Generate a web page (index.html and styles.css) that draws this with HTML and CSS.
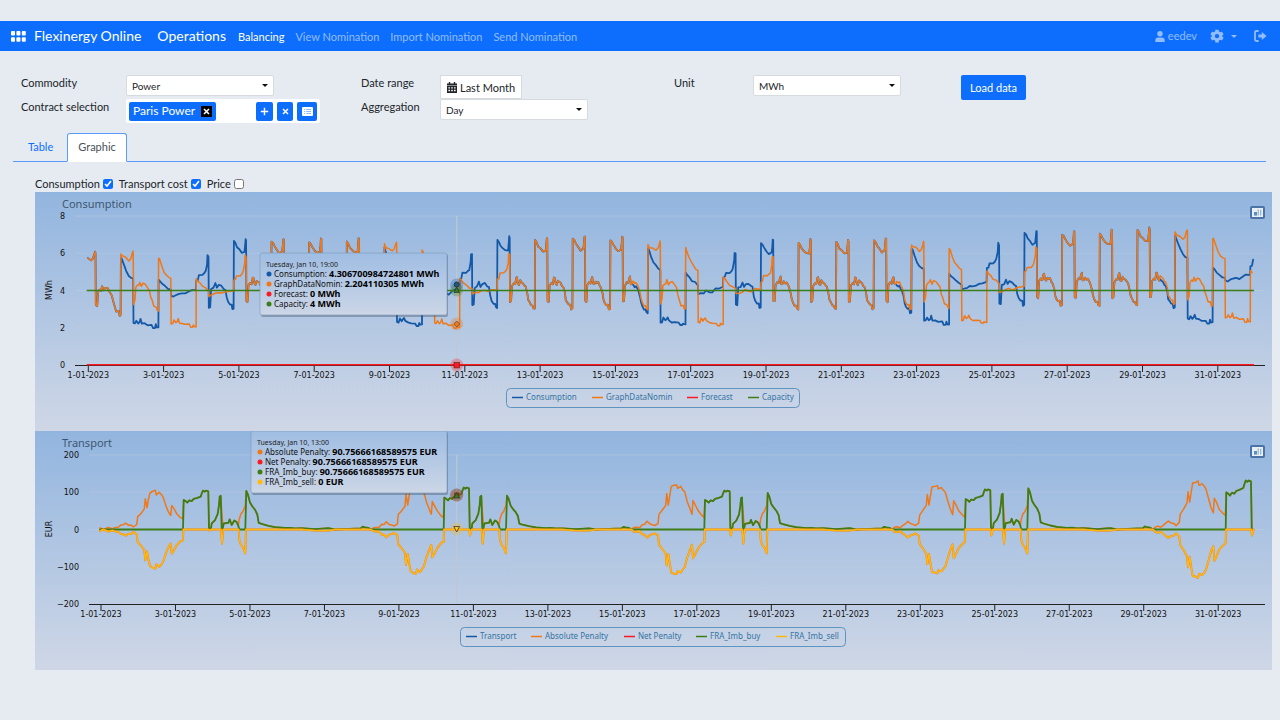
FILE: index.html
```html
<!DOCTYPE html>
<html lang="en">

<head>
    <meta charset="utf-8">
    <title>Flexinergy Online</title>
    <link rel="stylesheet" href="styles.css">
</head>

<body>
    <nav class="navbar">
        <a href="#" class="apps" aria-label="Applications">
            <svg width="15" height="11" viewBox="0 0 15 11" fill="currentColor">
                <rect x="0" y="0" width="4" height="4.6" rx="1" />
                <rect x="5.4" y="0" width="4" height="4.6" rx="1" />
                <rect x="10.8" y="0" width="4" height="4.6" rx="1" />
                <rect x="0" y="6.2" width="4" height="4.6" rx="1" />
                <rect x="5.4" y="6.2" width="4" height="4.6" rx="1" />
                <rect x="10.8" y="6.2" width="4" height="4.6" rx="1" />
            </svg>
        </a>
        <a href="#" class="brand">Flexinergy Online</a>
        <a href="#" class="brand section">Operations</a>
        <a href="#" class="nav-link active">Balancing</a>
        <a href="#" class="nav-link">View Nomination</a>
        <a href="#" class="nav-link">Import Nomination</a>
        <a href="#" class="nav-link">Send Nomination</a>
        <div class="nav-right">
            <a href="#" class="user">
                <svg width="10" height="11" viewBox="0 0 10 11" fill="currentColor">
                    <circle cx="5" cy="2.8" r="2.7" />
                    <path d="M0.3 11V9.4Q0.3 6.4 3.2 6.4H6.8Q9.7 6.4 9.7 9.4V11Z" />
                </svg>
                eedev
            </a>
            <a href="#" class="settings" aria-label="Settings">
                <svg width="14" height="14" viewBox="0 0 14 14">
                    <path fill="currentColor" fill-rule="evenodd"
                        d="M5.4 0.8H8.6L9 2.6L10.3 3.3L12 2.7L13.6 5.4L12.2 6.6V7.6L13.6 8.8L12 11.4L10.3 10.8L9 11.6L8.6 13.4H5.4L5 11.6L3.7 10.8L2 11.4L0.4 8.8L1.8 7.6V6.6L0.4 5.4L2 2.7L3.7 3.3L5 2.6ZM7 4.9A2.2 2.2 0 1 0 7 9.3A2.2 2.2 0 1 0 7 4.9Z" />
                </svg>
                <span class="caret"></span>
            </a>
            <a href="#" class="logout" aria-label="Log out">
                <svg width="13" height="12" viewBox="0 0 13 12">
                    <path d="M4.6 1H2.4Q1 1 1 2.4V9.6Q1 11 2.4 11H4.6" fill="none" stroke="currentColor"
                        stroke-width="1.8" />
                    <path d="M4.4 4.6H7.8V2L12.6 6L7.8 10V7.4H4.4Z" fill="currentColor" />
                </svg>
            </a>
        </div>
    </nav>

    <form class="filters" onsubmit="return false">
        <div class="filter-col wide">
            <label for="commodity">Commodity</label>
            <div class="select">
                <select id="commodity">
                    <option>Power</option>
                </select>
            </div>
            <span class="label">Contract selection</span>
            <div class="contracts">
                <span class="chip">Paris Power
                    <button type="button" class="chip-remove" aria-label="Remove Paris Power">
                        <svg width="11" height="11" viewBox="0 0 11 11">
                            <path d="M3 3L8 8M8 3L3 8" stroke="#fff" stroke-width="1.6" />
                        </svg>
                    </button>
                </span>
                <button type="button" class="tool add" aria-label="Add contract">
                    <svg width="9" height="9" viewBox="0 0 9 9">
                        <path d="M4.5 0.8V8.2M0.8 4.5H8.2" stroke="#fff" stroke-width="1.4" />
                    </svg>
                </button>
                <button type="button" class="tool" aria-label="Clear contracts">
                    <svg width="7" height="7" viewBox="0 0 7 7">
                        <path d="M1 1L6 6M6 1L1 6" stroke="#fff" stroke-width="1.5" />
                    </svg>
                </button>
                <button type="button" class="tool list" aria-label="Contract list">
                    <svg width="11" height="9" viewBox="0 0 11 9">
                        <rect x="0" y="0" width="11" height="9" rx="1" fill="#fff" />
                        <path d="M2 2.5H3.2M2 4.5H3.2M2 6.5H3.2M4.2 2.5H9M4.2 4.5H9M4.2 6.5H9" stroke="#0d6efd"
                            stroke-opacity="0.6" stroke-width="0.8" />
                    </svg>
                </button>
            </div>
        </div>
        <div class="filter-col">
            <span class="label">Date range</span>
            <button type="button" class="date-button">
                <svg width="10" height="11" viewBox="0 0 10 11">
                    <path d="M2.5 0V2M7.5 0V2" stroke="#212529" stroke-width="1.4" />
                    <path d="M0 1.4H10V3.4H0ZM0 4H10V11H0Z" fill="#212529" />
                    <path d="M1.4 5.9H8.6M1.4 8.5H8.6" stroke="#fff" stroke-width="1.3" stroke-dasharray="1.6 1.2" />
                </svg>
                Last Month
            </button>
            <label for="aggregation">Aggregation</label>
            <div class="select">
                <select id="aggregation">
                    <option>Day</option>
                </select>
            </div>
        </div>
        <div class="filter-col">
            <label for="unit">Unit</label>
            <div class="select">
                <select id="unit">
                    <option>MWh</option>
                </select>
            </div>
        </div>
        <div>
            <button type="submit" class="load-button">Load data</button>
        </div>
    </form>

    <div class="tabs">
        <a href="#" class="tab">Table</a>
        <a href="#" class="tab active">Graphic</a>
    </div>

    <div class="content">
        <div class="toggles">
            <label>Consumption <input type="checkbox" checked></label>
            <label>Transport cost <input type="checkbox" checked></label>
            <label>Price <input type="checkbox"></label>
        </div>

        <div class="chart">
            <svg id="consumption-chart" viewBox="0 0 1237 239"></svg>
            <button type="button" class="export" aria-label="Export consumption chart">
                <svg width="11" height="9" viewBox="0 0 11 9">
                    <rect width="11" height="9" fill="#e8f0f6" />
                    <path d="M2 4H5V7.6H2Z" fill="#5a8fc0" />
                    <path d="M6.2 1.5V7.5M8.7 1.8V7.6" stroke="#8fb2cc" stroke-width="1.2" />
                </svg>
            </button>
        </div>
        <div class="chart">
            <svg id="transport-chart" viewBox="0 0 1237 239"></svg>
            <button type="button" class="export" aria-label="Export transport chart">
                <svg width="11" height="9" viewBox="0 0 11 9">
                    <rect width="11" height="9" fill="#e8f0f6" />
                    <path d="M2 4H5V7.6H2Z" fill="#5a8fc0" />
                    <path d="M6.2 1.5V7.5M8.7 1.8V7.6" stroke="#8fb2cc" stroke-width="1.2" />
                </svg>
            </button>
        </div>
    </div>

    <script src="charts.js"></script>
</body>

</html>
```
FILE: styles.css
```css
body {
    font-family: Lato, "Open Sans", sans-serif;
    font-size: 11px;
    line-height: 16px;
    margin: 0;
    padding-top: 21px;
    background-color: #e5ebf1;
    color: #212529;
}

a {
    text-decoration: none;
}

button,
select,
input {
    font-family: inherit;
    color: inherit;
    margin: 0;
}

button {
    cursor: pointer;
    padding: 0;
    border: none;
}

svg {
    display: block;
}

.navbar {
    display: flex;
    align-items: center;
    height: 30px;
    padding: 0 13px 0 11px;
    background-color: #0d6efd;
    color: white;
}

.navbar a {
    color: rgba(255, 255, 255, 0.55);
}

.navbar a.apps {
    color: white;
    margin-right: 8px;
}

.navbar a.brand {
    color: white;
    font-size: 14px;
    margin-right: 16px;
}

.navbar a.section {
    margin-right: 12px;
}

.navbar a.nav-link {
    padding-top: 2px;
    margin-right: 11px;
}

.navbar a.active {
    color: white;
}

.nav-right {
    display: flex;
    align-items: center;
    margin-left: auto;
}

.user,
.settings {
    display: flex;
    align-items: center;
    gap: 3px;
    margin-right: 13px;
}

.settings {
    gap: 7px;
    margin-right: 17px;
}

.caret {
    border: 3px solid transparent;
    border-top-color: currentColor;
    border-bottom: none;
}

.filters {
    display: grid;
    grid-template-columns: 340fr 313fr 287fr 298fr;
    padding: 24px 21px 10px;
}

.filter-col {
    display: grid;
    grid-template-columns: 79px auto;
    grid-auto-rows: 24px;
    align-content: start;
    justify-content: start;
}

.filter-col.wide {
    grid-template-columns: 105px auto;
}

.select {
    position: relative;
    width: 148px;
    height: 21px;
}

.select::after {
    content: "";
    position: absolute;
    right: 6px;
    top: 9px;
    border: 3px solid transparent;
    border-top-color: #111;
    border-bottom: none;
}

.select select {
    appearance: none;
    box-sizing: border-box;
    width: 100%;
    height: 100%;
    padding: 0 5px;
    font-size: 10px;
    background-color: white;
    border: 1px solid #d6dbe0;
    border-radius: 2px;
}

.contracts {
    box-sizing: border-box;
    display: flex;
    align-items: center;
    gap: 4px;
    width: 194px;
    height: 24px;
    padding: 0 3px;
    background-color: white;
    border-radius: 2px;
}

.chip {
    display: flex;
    align-items: center;
    gap: 6px;
    height: 19px;
    padding: 0 4px;
    font-size: 12px;
    background-color: #0d6efd;
    color: white;
    border-radius: 2px;
}

.chip-remove {
    background-color: black;
}

.tool {
    display: flex;
    align-items: center;
    justify-content: center;
    width: 16px;
    height: 19px;
    background-color: #0d6efd;
    border-radius: 2px;
}

.tool.add {
    margin-left: auto;
    width: 17px;
}

.tool.list {
    width: 20px;
}

.date-button {
    display: flex;
    align-items: center;
    gap: 3px;
    justify-self: start;
    height: 24px;
    padding: 0 6px;
    font-size: 11px;
    background-color: white;
    border: 1px solid #d6dbe0;
}

.load-button {
    display: block;
    height: 25px;
    width: 65px;
    font-size: 11px;
    background-color: #0d6efd;
    color: white;
    border-radius: 2px;
}

.tabs {
    display: flex;
    margin: 0 14px 0 13px;
    border-bottom: 1px solid #5a9cfb;
}

.tab {
    padding: 5px 13px 6px 14px;
    margin-bottom: -1px;
    border: 1px solid transparent;
    color: #0d6efd;
}

.tab.active {
    padding-left: 10px;
    padding-right: 10px;
    color: #495057;
    background-color: white;
    border-color: #5a9cfb #5a9cfb white;
    border-radius: 3px 3px 0 0;
}

.content {
    padding: 14px 8px 0 35px;
}

.toggles {
    display: flex;
    gap: 6px;
}

.toggles label {
    display: flex;
    align-items: center;
    gap: 3px;
}

.toggles input {
    width: 10px;
    height: 10px;
    accent-color: #0d6efd;
}

.chart {
    position: relative;
}

.chart > svg {
    width: 100%;
    height: auto;
    background: linear-gradient(#92b5df, #cfd7e6);
    font-family: "Noto Sans", sans-serif;
}

.export {
    position: absolute;
    top: 14px;
    right: 7px;
    padding: 2px;
    background-color: #4a74a8;
    border-radius: 2px;
}

.chart-title {
    font-size: 11px;
    fill: #3e576f;
}

.axis-label {
    font-family: "DejaVu Sans", sans-serif;
    font-size: 8px;
    fill: #111;
}

.legend-label {
    font-size: 8px;
    fill: #3474a4;
}

.tip-head {
    font-size: 7px;
    fill: #222;
}

.tip-row {
    font-size: 8px;
    fill: #111;
}

.tip-row tspan {
    font-size: 9px;
    font-weight: bold;
    fill: black;
}

.series {
    fill: none;
    stroke-linejoin: round;
    stroke-linecap: round;
}
```
FILE: charts.js
```js
var BLUE = '#1459a8', ORANGE = '#f07818', RED = '#fb1a24', GREEN = '#3b7d16', YELLOW = '#ffb90f';

// plot area, shared by both charts
var TOP = 24, BOTTOM = 173, RIGHT = 1230;

function line(x1, y1, x2, y2, color, width) {
    return '<line x1="' + x1 + '" y1="' + y1 + '" x2="' + x2 + '" y2="' + y2 +
        '" stroke="' + color + '" stroke-width="' + (width || 1) + '"/>';
}

function text(x, y, cls, anchor, content) {
    return '<text x="' + x + '" y="' + y + '" class="' + cls + '" text-anchor="' + anchor + '">' + content + '</text>';
}

function series(points, color, width) {
    return '<polyline class="series" stroke="' + color + '" stroke-width="' + width + '" points="' +
        points.map(function (p) { return p[0].toFixed(1) + ',' + p[1].toFixed(1); }).join(' ') + '"/>';
}

function frame(o) {
    var s = text(27, 16, 'chart-title', 'start', o.title);
    o.yLabels.forEach(function (label, i) {
        var y = TOP + (BOTTOM - TOP) * i / 4;
        if (i < 4) s += line(o.left, y, RIGHT, y, '#c0d0e0', 0.4);
        s += text(o.labelRight, y + 3, 'axis-label', 'end', label);
    });
    s += '<text class="axis-label" text-anchor="middle" transform="translate(17 98) rotate(-90)">' + o.unit + '</text>';
    s += line(o.left, BOTTOM + 0.5, RIGHT, BOTTOM + 0.5, '#222');
    for (var d = 0; d <= 30; d += 2) {
        var x = o.first + d * o.day;
        s += line(x, BOTTOM, x, BOTTOM + 7, '#222');
        s += text(x, BOTTOM + 13, 'axis-label', 'middle', (d + 1) + '-01-2023');
    }
    s += '<rect x="' + o.legend[0] + '" y="196.5" width="' + o.legend[1] +
        '" height="19" rx="4" fill="none" stroke="#5f93c0"/>';
    o.items.forEach(function (it) {
        s += line(it[0], 205.5, it[0] + 11, 205.5, it[2], 1.5);
        s += text(it[0] + 14, 208, 'legend-label', 'start', it[1]);
    });
    return s;
}

function tooltip(x, y, w, head, rows) {
    var s = '<rect x="' + (x + 1) + '" y="' + (y + 1) + '" width="' + w + '" height="63" rx="2" fill="#345" fill-opacity="0.35"/>';
    s += '<rect x="' + x + '" y="' + y + '" width="' + w + '" height="62" rx="2" fill="url(#tip)" stroke="#7c99bb" stroke-width="0.6"/>';
    s += text(x + 6, y + 14, 'tip-head', 'start', head);
    rows.forEach(function (r, i) {
        var ry = y + 21 + i * 10;
        s += '<circle cx="' + (x + 9) + '" cy="' + ry + '" r="2.5" fill="' + r[0] + '"/>';
        s += text(x + 14, ry + 3, 'tip-row', 'start', r[1] + ': <tspan>' + r[2] + '</tspan>');
    });
    return s;
}

function halo(x, y, color) {
    return '<circle cx="' + x + '" cy="' + y + '" r="6.5" fill="' + color + '" fill-opacity="0.3"/>';
}

var defs = '<defs><linearGradient id="tip" x1="0" y1="0" x2="0" y2="1">' +
    '<stop offset="0" stop-color="#9fbde3"/><stop offset="1" stop-color="#ccd6e6"/></linearGradient></defs>';

/* Consumption: one cycle is 24h from 21:00, 8h peak then 16h off-peak, values in MWh */
var peak = {
    normal: [[0, 6.6], [1, 6.5], [2, 6.3], [3.5, 6.15], [5, 6], [6.8, 6.05], [7.2, 6.4], [7.5, 6.75], [7.8, 6.7]],
    flat: [[0, 5.95], [0.8, 5.8], [3, 5.75], [5, 5.6], [6.2, 5.7], [7, 5.9], [7.6, 6.1], [7.8, 6]],
    falling: [[0, 5.75], [0.6, 5.65], [2, 5.3], [3.5, 5], [5, 4.8], [6.5, 4.65], [7.8, 4.6]],
    shallow: [[0, 4.6], [1, 4.5], [2.5, 4.35], [4, 4.2], [6, 4.1], [7.8, 4]],
    rising: [[0, 4.5], [1, 4.55], [1.7, 4.8], [4, 4.8], [5.2, 4.9], [6, 5], [6.9, 5.4], [7.2, 5.85], [7.8, 5.8]]
};
var off = {
    normal: [[8, 3.4], [8.7, 3.4], [9.3, 4.25], [10.3, 4.4], [11.3, 4.35], [12, 4.65], [12.5, 4.7], [13, 4.35],
        [13.8, 4.3], [14.5, 4.5], [15.5, 4.4], [16.3, 4.4], [17.2, 4.25], [18, 4.15], [19, 3.85], [19.6, 3.5],
        [20.4, 3.35], [21.4, 3.2], [22.4, 3.2], [23, 3], [23.8, 3]],
    deep: [[8, 3.2], [8.9, 3.2], [9.5, 3.9], [10.5, 4], [11.3, 4], [12, 4.2], [13, 3.95], [14, 4.1],
        [15.5, 4.1], [17, 3.9], [18.2, 3.75], [19, 3.4], [19.8, 3.2], [21, 2.85], [22.5, 2.85], [23.2, 2.65], [23.8, 2.65]],
    low: [[8, 2.2], [9, 2.2], [9.8, 2.4], [11, 2.25], [12, 2.35], [12.5, 2.45], [13.3, 2.25], [15, 2.2],
        [17, 2.15], [19.5, 2.15], [20.5, 2], [21.7, 2], [22.2, 2.15], [22.8, 2.05], [23.9, 2.05]],
    steady: [[8, 3.7], [9.5, 3.7], [11.5, 3.75], [13, 3.85], [15, 3.82], [17, 3.8], [19, 3.95], [21, 4], [23.8, 4.05]],
    dip: [[8, 3.1], [8.9, 3.1], [9.5, 4.05], [11, 4.1], [12.2, 4.35], [13.2, 4.1], [14.4, 4.25], [16, 4.25],
        [17.5, 4.1], [18.6, 4.05], [19.4, 3.6], [20.3, 3.35], [21.5, 3.2], [22.6, 3.2], [23, 2.98], [23.8, 2.98]],
    calm: [[8, 3.7], [10, 3.75], [12, 3.8], [14, 3.9], [16, 3.85], [18, 3.85], [20, 3.95], [23.8, 3.95]]
};

// cycle types by day of the week, first one is Saturday evening
var blueWeek = [['normal', 'normal'], ['falling', 'low'], ['shallow', 'steady'], ['rising', 'dip'],
    ['normal', 'normal'], ['normal', 'normal'], ['normal', 'normal']];
var orangeWeek = [['normal', 'normal'], ['flat', 'deep'], ['falling', 'low'], ['shallow', 'calm'],
    ['rising', 'normal'], ['normal', 'normal'], ['normal', 'normal']];

// level shift per cycle, MWh
var peakShift = [0, 0, 0, 0, 0, 0, 0, 0, 0.5, 0.4, 0.1, 0.1, 0.05, 0.15, 0.1, 0.5, 0.5, 0.15, -0.05, -0.05, -0.05, 0.05,
    0.5, 0.5, 0.65, 0.45, 0.4, 0.45, 0.6, 1.15, 1.05, 0.8];
var offShift = [0, 0, 0, 0, 0, 0, 0, 0, 0.1, 0, 0.1, 0, 0, 0, 0, 0.1, 0.1, 0.1, 0, 0, 0, 0, 0.15, 0.2, 0.2, 0.2, 0.2,
    0.2, 0.25, 0.25, 0.3, 0.3];

function consumption(week, hourWidth, first, blue) {
    var pts = [];
    for (var k = 0; k < 32; k++) {
        var kinds = k ? week[k % 7] : ['flat', 'deep'];
        var add = function (list, shift) {
            list.forEach(function (p) {
                var h = k * 24 + p[0] - 3.2;
                if (h < -1 || h > 743) return;
                var extra = 0;
                // Sunday nights run lower, the last Tuesday higher
                if (blue && kinds[1] === 'normal' && k % 7 === 0 && p[0] > 14) extra = -0.2;
                if (kinds[1] === 'deep' && k > 0 && p[0] > 8) extra = 0.25;
                if (kinds[1] === 'steady' && k > 20 && p[0] >= 8) extra = k > 29 ? 0.5 : 0.2;
                var value = p[1] + shift + extra + Math.sin(h * 5.3) * 0.04;
                pts.push([first + h * hourWidth, BOTTOM - value * 18.7]);
            });
        };
        add(peak[kinds[0]], peakShift[k] * (kinds[0] === 'shallow' ? 0.6 : 1));
        add(off[kinds[1]], offShift[k]);
    }
    return pts;
}

(function () {
    var first = 53.3, day = 37.65, hour = day / 24, cx = 421.7;
    var s = defs + frame({
        title: 'Consumption', unit: 'MWh', yLabels: [8, 6, 4, 2, 0], left: 40, labelRight: 30,
        first: first, day: day, legend: [471.5, 293],
        items: [[477, 'Consumption', BLUE], [557, 'GraphDataNomin', ORANGE], [652, 'Forecast', RED], [713, 'Capacity', GREEN]]
    });
    s += line(cx, TOP, cx, BOTTOM, '#c0c8d0', 1.2);
    s += series(consumption(blueWeek, hour, first, true), BLUE, 1.8);
    s += series(consumption(orangeWeek, hour, first, false), ORANGE, 1.5);
    s += line(51.7, 98.5, 1219, 98.5, GREEN, 1.5);
    s += line(51.7, 172.8, 1219, 172.8, RED, 1.6);
    s += halo(cx, 93, BLUE) + halo(cx, 98, GREEN) + halo(cx, 132, ORANGE) + halo(cx, 173, RED);
    s += '<circle cx="' + cx + '" cy="92.5" r="2.5" fill="#1d5c82" stroke="#234"/>';
    s += '<path d="M421.7 95L424.5 100.5H419Z" fill="#3b7d16" stroke="#233" stroke-width="0.7"/>';
    s += '<path d="M421.7 129L424.7 132L421.7 135L418.7 132Z" fill="#f07818" stroke="#543" stroke-width="0.7"/>';
    s += '<rect x="419" y="170.5" width="5.4" height="5.4" fill="#fb1a24" stroke="#622" stroke-width="0.7"/>';
    s += tooltip(225, 61, 187, 'Tuesday, Jan 10, 19:00', [
        [BLUE, 'Consumption', '4.306700984724801 MWh'], [ORANGE, 'GraphDataNomin', '2.204110305 MWh'],
        [RED, 'Forecast', '0 MWh'], [GREEN, 'Capacity', '4 MWh']
    ]);
    document.getElementById('consumption-chart').innerHTML = s;
})();

/* Transport: one week of penalties, x in thirds of a unit from the first week, values in EUR */
var hump = [[195, 3], [205, 1], [220, 5], [232, 4], [240, 6], [250, 5], [258, 11], [265, 13], [272, 18], [280, 13],
    [288, 12], [295, 8], [305, 14], [308, 34], [318, 44], [328, 56], [331, 82], [336, 58], [340, 78], [345, 99],
    [352, 101], [361, 104], [364, 94], [373, 99], [380, 92], [385, 86], [393, 64], [400, 48], [407, 36], [410, 66],
    [416, 58], [425, 43], [435, 34], [443, 29]];
var block = [[446, 79], [452, 76], [457, 72], [463, 78], [470, 76], [476, 82], [485, 84], [497, 88], [501, 98], [504, 104],
    [509, 101], [513, 104], [520, 102]];
var spike = [[528, 3], [530, 16], [540, 25], [548, 42], [552, 65], [554, 88], [557, 90]];
var mid = [[563, 2], [566, 16], [577, 18], [580, 18], [584, 27], [590, 12], [598, 24], [605, 20], [610, 10]];
var tail = [[634, 103], [639, 93], [645, 72], [652, 62], [660, 53], [667, 40], [671, 18], [680, 15], [700, 10], [720, 5],
    [750, 4], [765, 3], [780, 3], [800, 2], [840, 1], [880, 2], [900, 0], [960, 1], [977, 3], [983, 6], [990, 6],
    [1000, 3], [1008, 0]];

(function () {
    var cx = 421.7, first = 66, day = 37.24;
    var humpScale = [1, 1.14, 1.16, 1.14, 1.25];
    var blockScale = [1, 1.08, 1, 1.03, 1.26];
    var spikeScale = [1, 1, 0.95, 1.06, 1];
    var tailScale = [1, 0.88, 0.95, 1.07, 1];
    var abs = [], buy = [], sell = [];

    function put(list, w, x, value) {
        var gx = x + w * 782;
        if (gx > 3656) return;
        list.push([gx / 3, 98.5 - value * 0.374]);
    }

    for (var w = 0; w < 5; w++) {
        hump.forEach(function (p) {
            if (w > 0 && p[0] < 232) return;
            var wobble = Math.sin(p[0] * 3 + w) * 1.5;
            put(abs, w, p[0], p[1] * humpScale[w] + wobble);
            put(sell, w, p[0], -p[1] * humpScale[w] - wobble);
        });
        put(sell, w, 444, -29 * humpScale[w]);
        put(sell, w, 445, 0);
        put(buy, w, w ? 235 : 195, 0);
        put(buy, w, 444, 0);
        block.forEach(function (p) {
            put(buy, w, p[0], p[1] * blockScale[w]);
            put(abs, w, p[0], p[1] * blockScale[w]);
        });
        put(buy, w, 522, 0);
        put(abs, w, 523, 0);
        put(sell, w, 521, 0);
        put(sell, w, 523, w ? -16 : -3);
        put(sell, w, 528, 0);
        if (w === 4) break;
        spike.forEach(function (p) {
            put(buy, w, p[0], p[1] * spikeScale[w]);
            put(abs, w, p[0], p[1] * spikeScale[w]);
        });
        put(buy, w, 560, 0);
        put(abs, w, 561, 38);
        put(abs, w, 564, 5);
        put(sell, w, 558, 0);
        put(sell, w, 561, -38);
        put(sell, w, 565, 0);
        mid.forEach(function (p) {
            put(buy, w, p[0], p[1] * spikeScale[w]);
            put(abs, w, p[0], p[1] * spikeScale[w]);
        });
        put(buy, w, 613, 0);
        put(buy, w, 631, 0);
        put(sell, w, 611, 0);
        [[613, 28], [618, 42], [624, 48], [629, 60], [631, 64]].forEach(function (p) {
            put(abs, w, p[0], p[1]);
            put(sell, w, p[0], -p[1]);
        });
        put(sell, w, 633, 0);
        tail.forEach(function (p, i) {
            var wobble = p[0] > 690 && i % 2 ? 1.5 : 0;
            put(buy, w, p[0], p[1] * tailScale[w] + wobble);
            put(abs, w, p[0], p[1] * tailScale[w] + wobble);
            if (p[0] > 780) put(sell, w, p[0], p[0] > 820 && p[0] < 900 ? -3 : 0);
        });
        put(buy, w, 1010, 0);
    }
    put(sell, 4, 526, -6);
    put(sell, 4, 528, 0);

    var s = frame({
        title: 'Transport', unit: 'EUR', yLabels: ['200', '100', '0', '−100', '−200'],
        left: 54, labelRight: 44, first: first, day: day, legend: [425.5, 385],
        items: [[431, 'Transport', BLUE], [496, 'Absolute Penalty', ORANGE], [589, 'Net Penalty', RED],
            [661, 'FRA_Imb_buy', GREEN], [741, 'FRA_Imb_sell', YELLOW]]
    });
    s += line(cx, TOP, cx, BOTTOM, '#c0c8d0', 1.2);
    s += series(abs, ORANGE, 1.5) + series(buy, GREEN, 1.8);
    s += series(sell, ORANGE, 1.9) + series(sell, YELLOW, 1.4);
    s += halo(cx, 64, '#a02010') + halo(cx, 64, '#806020') + halo(cx, 98, YELLOW);
    s += '<path d="M419 61.5H424.4V67H419Z" fill="#8a3a20"/><path d="M421.7 61.5L424.6 67H418.8Z" fill="#3b7d16" stroke="#233" stroke-width="0.7"/>';
    s += '<path d="M418.8 95.5H424.6L421.7 101Z" fill="#ffc820" stroke="#333" stroke-width="0.8"/>';
    s += tooltip(216, 0, 196, 'Tuesday, Jan 10, 13:00', [
        [ORANGE, 'Absolute Penalty', '90.75666168589575 EUR'], [RED, 'Net Penalty', '90.75666168589575 EUR'],
        [GREEN, 'FRA_Imb_buy', '90.75666168589575 EUR'], [YELLOW, 'FRA_Imb_sell', '0 EUR']
    ]);
    document.getElementById('transport-chart').innerHTML = s;
})();
```
